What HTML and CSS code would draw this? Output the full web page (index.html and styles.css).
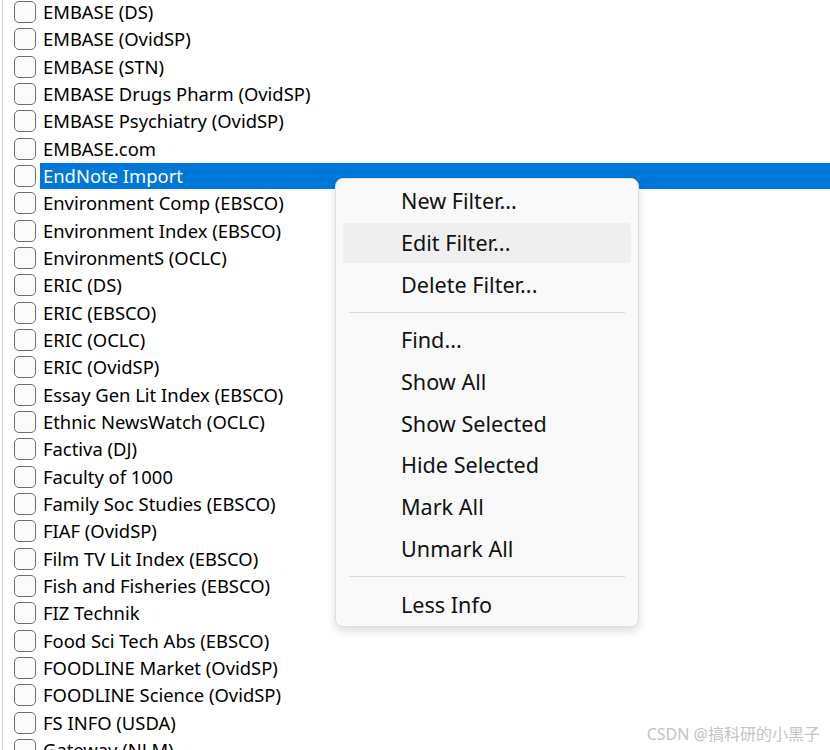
FILE: index.html
```html
<!DOCTYPE html>
<html>
<head>
<meta charset="utf-8">
<link rel="stylesheet" href="styles.css">
</head>
<body>
<div class="screen">
  <ul class="list">
    <li class="row"><span class="box"></span><span class="label">EMBASE (DS)</span></li>
    <li class="row"><span class="box"></span><span class="label">EMBASE (OvidSP)</span></li>
    <li class="row"><span class="box"></span><span class="label">EMBASE (STN)</span></li>
    <li class="row"><span class="box"></span><span class="label">EMBASE Drugs Pharm (OvidSP)</span></li>
    <li class="row"><span class="box"></span><span class="label">EMBASE Psychiatry (OvidSP)</span></li>
    <li class="row"><span class="box"></span><span class="label">EMBASE.com</span></li>
    <li class="row selected"><span class="box"></span><span class="label">EndNote Import</span></li>
    <li class="row"><span class="box"></span><span class="label">Environment Comp (EBSCO)</span></li>
    <li class="row"><span class="box"></span><span class="label">Environment Index (EBSCO)</span></li>
    <li class="row"><span class="box"></span><span class="label">EnvironmentS (OCLC)</span></li>
    <li class="row"><span class="box"></span><span class="label">ERIC (DS)</span></li>
    <li class="row"><span class="box"></span><span class="label">ERIC (EBSCO)</span></li>
    <li class="row"><span class="box"></span><span class="label">ERIC (OCLC)</span></li>
    <li class="row"><span class="box"></span><span class="label">ERIC (OvidSP)</span></li>
    <li class="row"><span class="box"></span><span class="label">Essay Gen Lit Index (EBSCO)</span></li>
    <li class="row"><span class="box"></span><span class="label">Ethnic NewsWatch (OCLC)</span></li>
    <li class="row"><span class="box"></span><span class="label">Factiva (DJ)</span></li>
    <li class="row"><span class="box"></span><span class="label">Faculty of 1000</span></li>
    <li class="row"><span class="box"></span><span class="label">Family Soc Studies (EBSCO)</span></li>
    <li class="row"><span class="box"></span><span class="label">FIAF (OvidSP)</span></li>
    <li class="row"><span class="box"></span><span class="label">Film TV Lit Index (EBSCO)</span></li>
    <li class="row"><span class="box"></span><span class="label">Fish and Fisheries (EBSCO)</span></li>
    <li class="row"><span class="box"></span><span class="label">FIZ Technik</span></li>
    <li class="row"><span class="box"></span><span class="label">Food Sci Tech Abs (EBSCO)</span></li>
    <li class="row"><span class="box"></span><span class="label">FOODLINE Market (OvidSP)</span></li>
    <li class="row"><span class="box"></span><span class="label">FOODLINE Science (OvidSP)</span></li>
    <li class="row"><span class="box"></span><span class="label">FS INFO (USDA)</span></li>
    <li class="row"><span class="box"></span><span class="label">Gateway (NLM)</span></li>
  </ul>

  <div class="menu">
    <div class="item">New Filter...</div>
    <div class="item hover">Edit Filter...</div>
    <div class="item">Delete Filter...</div>
    <div class="sep"></div>
    <div class="item">Find...</div>
    <div class="item">Show All</div>
    <div class="item">Show Selected</div>
    <div class="item">Hide Selected</div>
    <div class="item">Mark All</div>
    <div class="item">Unmark All</div>
    <div class="sep"></div>
    <div class="item">Less Info</div>
  </div>

  <div class="watermark">CSDN @搞科研的小黑子</div>
</div>
</body>
</html>
```
FILE: styles.css
```css
html, body {
  margin: 0;
  padding: 0;
  background: #ffffff;
}
body {
  width: 830px;
  height: 750px;
  overflow: hidden;
  font-family: "Noto Sans", "Open Sans", sans-serif;
}
.screen {
  position: relative;
  width: 830px;
  height: 750px;
  overflow: hidden;
}
.list {
  list-style: none;
  margin: -1.67px 0 0 2px;
  padding: 0 0 0 11px;
  border-left: 1px solid #d2d2d2;
}
.row {
  display: flex;
  align-items: center;
  height: 27.33px;
}
.box {
  flex: none;
  width: 20px;
  height: 20px;
  border: 1.3px solid #6e6e6e;
  border-radius: 5px;
  background: #fbfbfb;
}
.label {
  margin-left: 4px;
  padding-left: 3px;
  font-size: 18.4px;
  line-height: 26px;
  color: #000;
  white-space: nowrap;
}
.selected .label {
  flex: 1;
  background: #0078d7;
  color: #ffffff;
}
.menu {
  position: absolute;
  left: 335px;
  top: 178px;
  width: 302px;
  padding: 1px 0;
  display: flex;
  flex-direction: column;
  background: #f9f9f9;
  border: 1px solid #dedede;
  border-radius: 8px;
  box-shadow: 0 4px 10px rgba(0,0,0,0.14);
}
.item {
  height: 40px;
  margin: 0.85px 7px;
  padding-left: 58px;
  display: flex;
  align-items: center;
  border-radius: 4px;
  font-size: 21.6px;
  color: #111;
}
.item.hover {
  background: #efefef;
}
.sep {
  height: 1px;
  margin: 6.5px 13px;
  background: #d9d9d9;
}
.watermark {
  position: absolute;
  right: 10px;
  bottom: 5px;
  font-family: "Noto Sans", "Noto Sans CJK SC", sans-serif;
  font-size: 16px;
  color: #c4c4c4;
}
```
